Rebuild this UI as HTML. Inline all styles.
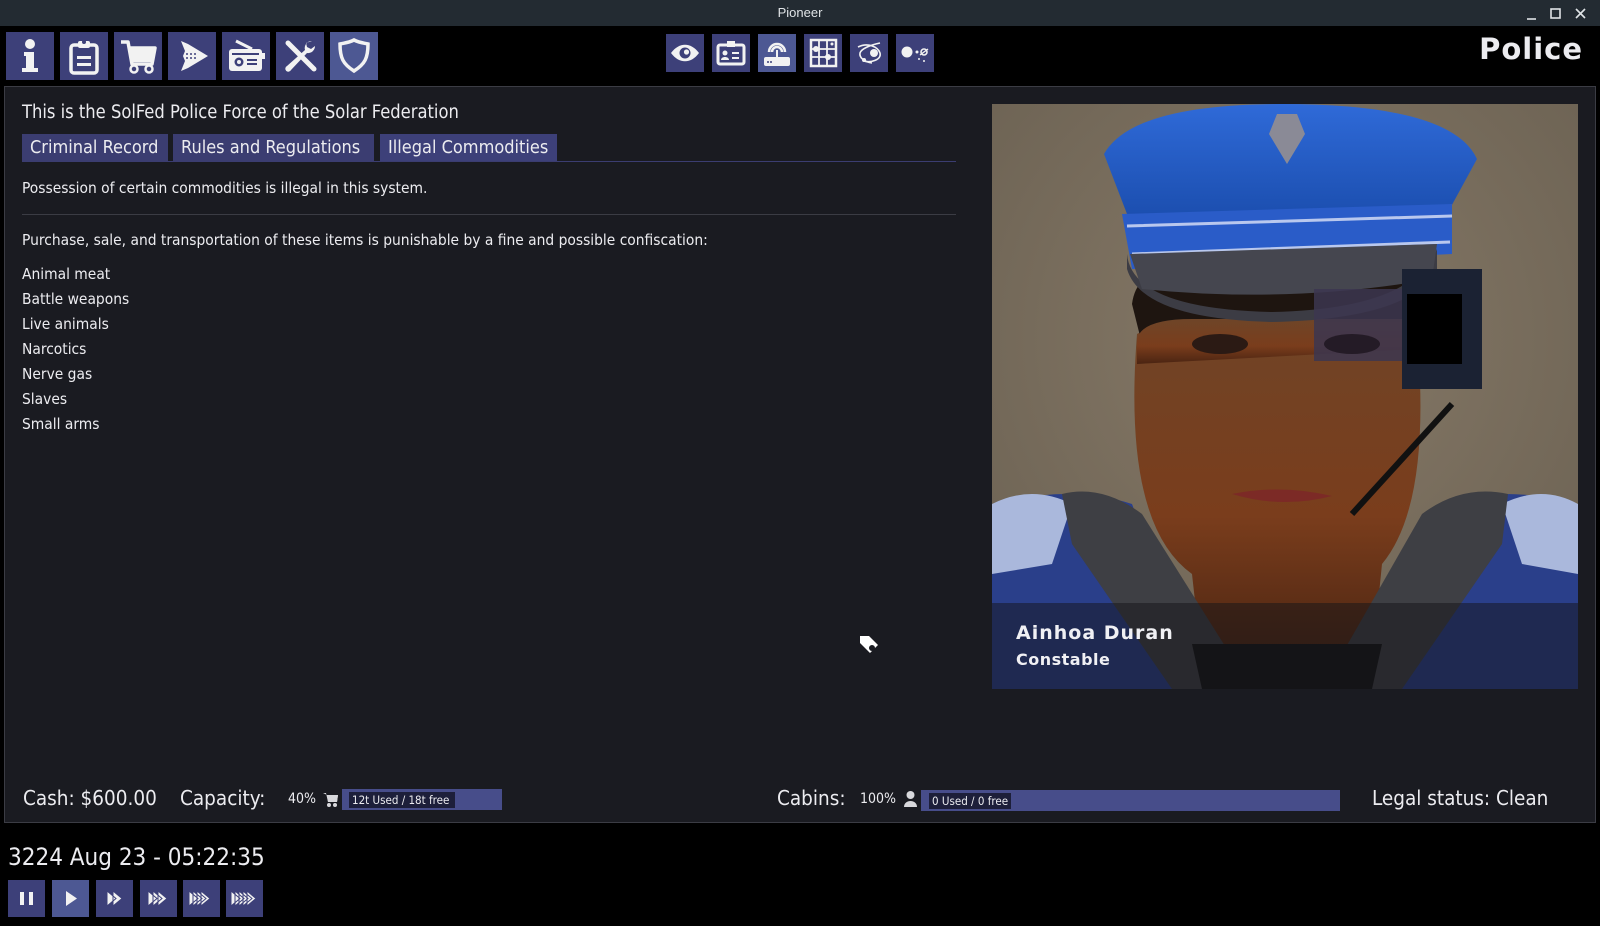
<!DOCTYPE html>
<html><head><meta charset="utf-8"><style>
*{margin:0;padding:0;box-sizing:border-box}
body{width:1600px;height:926px;background:#000;position:relative;overflow:hidden;font-family:"DejaVu Sans Condensed","Liberation Sans",sans-serif;color:#ececf0}
.abs{position:absolute}
.tb{left:0;top:0;width:1600px;height:26px;background:#232b32;color:#dfe3e6;font-size:13px;text-align:center;line-height:26px;font-family:"Liberation Sans",sans-serif}
.ib{position:absolute;top:32px;width:48px;height:48px;background:#3d4079}
.ib svg{width:48px;height:48px}
.ic{position:absolute;top:34px;width:38px;height:38px;background:#3d4079}
.ic svg{width:38px;height:38px}
.panel{left:4px;top:86px;width:1592px;height:737px;background:#1a1b21;border:1px solid #3b3c44}
.t{position:absolute;white-space:nowrap}
.tab{position:absolute;top:134px;height:27px;background:#3b3d71;font-size:18px;line-height:27px;padding-left:8px}
.li{position:absolute;left:22px;font-size:15.4px}
.btn{position:absolute;top:880px;width:37px;height:37px;background:#3d4079}
.btn svg{width:37px;height:37px}
</style></head><body>
<div class="abs tb">Pioneer</div>
<svg class="abs" style="left:1525px;top:6px" width="70" height="16" viewBox="0 0 70 16"><path d="M2 13h9" stroke="#dfe3e6" stroke-width="1.6"/><rect x="26" y="3" width="9" height="9" fill="none" stroke="#dfe3e6" stroke-width="1.6"/><path d="M51 3l9 9M60 3l-9 9" stroke="#dfe3e6" stroke-width="1.6"/></svg>

<div class="ib" style="left:6px"><svg viewBox="0 0 48 48"><circle cx="24" cy="12" r="5" fill="#f2f2f2"/><path d="M18 20h10v16h4v4H16v-4h4V24h-2z" fill="#f2f2f2"/></svg></div>
<div class="ib" style="left:60px"><svg viewBox="0 0 48 48"><rect x="11" y="13" width="26" height="28" rx="3" fill="none" stroke="#f2f2f2" stroke-width="3.5"/><rect x="18" y="9" width="12" height="7" rx="2" fill="#f2f2f2"/><circle cx="24" cy="10" r="2" fill="#3d4079"/><rect x="17" y="24" width="14" height="3" fill="#f2f2f2"/><rect x="17" y="31" width="14" height="3" fill="#f2f2f2"/></svg></div>
<div class="ib" style="left:114px"><svg viewBox="0 0 48 48"><path d="M7 10h7l4 22h20l3-16H15" fill="none" stroke="#f2f2f2" stroke-width="3.5" stroke-linejoin="round"/><path d="M16 17h25l-3 13H18z" fill="#f2f2f2"/><circle cx="20" cy="37" r="3.5" fill="none" stroke="#f2f2f2" stroke-width="2.5"/><circle cx="35" cy="37" r="3.5" fill="none" stroke="#f2f2f2" stroke-width="2.5"/></svg></div>
<div class="ib" style="left:168px"><svg viewBox="0 0 48 48"><path d="M13 9l7 3 20 12-20 12-7 3 4-10-2-5 2-5z" fill="#f2f2f2"/><path d="M18 22h10M18 26h10" stroke="#3d4079" stroke-width="1.5" stroke-dasharray="2 2"/></svg></div>
<div class="ib" style="left:222px"><svg viewBox="0 0 48 48"><path d="M14 9l16 8" stroke="#f2f2f2" stroke-width="3"/><rect x="7" y="17" width="33" height="22" rx="3" fill="#f2f2f2"/><rect x="40" y="21" width="3" height="6" fill="#f2f2f2"/><circle cx="17" cy="30" r="4.5" fill="#3d4079"/><circle cx="17" cy="30" r="2" fill="#f2f2f2"/><rect x="25" y="27" width="10" height="2" fill="#3d4079"/><rect x="25" y="31" width="10" height="2" fill="#3d4079"/><rect x="10" y="21" width="27" height="2" fill="#3d4079"/></svg></div>
<div class="ib" style="left:276px"><svg viewBox="0 0 48 48"><path d="M12 11l26 26" stroke="#f2f2f2" stroke-width="5" stroke-linecap="round"/><path d="M36 9a7 7 0 0 0-7 9L11 34a3 3 0 1 0 4 4l16-17a7 7 0 0 0 8-7l-4 3-4-2-1-4z" fill="#f2f2f2"/></svg></div>
<div class="ib" style="left:330px;background:#4d5893"><svg viewBox="0 0 48 48"><path d="M24 8c6 3 10 3 14 4 0 14-3 20-14 27C13 32 10 26 10 12c4-1 8-1 14-4z" fill="none" stroke="#f2f2f2" stroke-width="3.5"/></svg></div>

<div class="ic" style="left:666px"><svg viewBox="0 0 38 38"><path d="M5 19c8-11 20-11 28 0-8 11-20 11-28 0z" fill="#f2f2f2"/><circle cx="19" cy="19" r="5.5" fill="#3d4079"/><circle cx="20.5" cy="18" r="2.6" fill="#f2f2f2"/></svg></div>
<div class="ic" style="left:712px"><svg viewBox="0 0 38 38"><rect x="6" y="11" width="26" height="19" rx="2" fill="none" stroke="#f2f2f2" stroke-width="3"/><rect x="15" y="7" width="8" height="6" fill="#f2f2f2"/><circle cx="13" cy="19" r="2.5" fill="#f2f2f2"/><path d="M9 26c0-4 8-4 8 0z" fill="#f2f2f2"/><rect x="20" y="18" width="7" height="2" fill="#f2f2f2"/><rect x="20" y="23" width="7" height="2" fill="#f2f2f2"/></svg></div>
<div class="ic" style="left:758px;background:#4d5893"><svg viewBox="0 0 38 38"><path d="M11 18a8 8 0 0 1 16 0M14 18a5 5 0 0 1 10 0" fill="none" stroke="#f2f2f2" stroke-width="2.5"/><rect x="18" y="16" width="2" height="8" fill="#f2f2f2"/><rect x="6" y="23" width="26" height="9" rx="2" fill="#f2f2f2"/><circle cx="10" cy="28" r="1" fill="#3d4079"/><circle cx="13" cy="28" r="1" fill="#3d4079"/></svg></div>
<div class="ic" style="left:804px"><svg viewBox="0 0 38 38"><rect x="7" y="6" width="25" height="26" fill="none" stroke="#f2f2f2" stroke-width="2.5"/><path d="M15 6v26M23 6v26M7 15h25M7 23h25" stroke="#f2f2f2" stroke-width="1.8"/><circle cx="12" cy="15" r="3" fill="#f2f2f2"/><circle cx="24" cy="23" r="3" fill="#f2f2f2"/><circle cx="28" cy="10" r="1.5" fill="#f2f2f2"/></svg></div>
<div class="ic" style="left:850px"><svg viewBox="0 0 38 38"><path d="M8 13c10-5 20 0 22 6 2 7-10 10-16 8" fill="none" stroke="#f2f2f2" stroke-width="1.6"/><path d="M30 9c-10 2-19 6-20 10-1 5 5 9 12 10" fill="none" stroke="#f2f2f2" stroke-width="1.6"/><circle cx="24" cy="19" r="4" fill="#f2f2f2"/><circle cx="14" cy="26" r="2" fill="#f2f2f2"/></svg></div>
<div class="ic" style="left:896px"><svg viewBox="0 0 38 38"><circle cx="11" cy="18" r="5.5" fill="#f2f2f2"/><circle cx="21" cy="18" r="1.5" fill="#f2f2f2"/><circle cx="28" cy="18" r="3" fill="none" stroke="#f2f2f2" stroke-width="1.6"/><path d="M24 21l8-6" stroke="#f2f2f2" stroke-width="1.4"/><circle cx="23" cy="25" r="1" fill="#f2f2f2"/><circle cx="28" cy="27" r="1" fill="#f2f2f2"/></svg></div>

<div class="t" style="right:17px;top:32px;font-size:29px;font-family:'DejaVu Sans',sans-serif;font-weight:bold;letter-spacing:1px">Police</div>

<div class="abs panel"></div>
<div class="t" style="left:22px;top:102px;font-size:18.2px">This is the SolFed Police Force of the Solar Federation</div>
<div class="tab" style="left:22px;width:146px">Criminal Record</div>
<div class="tab" style="left:173px;width:201px">Rules and Regulations</div>
<div class="tab" style="left:380px;width:177px;background:#3d4079">Illegal Commodities</div>
<div class="abs" style="left:22px;top:161px;width:934px;height:1px;background:#3b3d71"></div>
<div class="t" style="left:22px;top:179px;font-size:15.4px">Possession of certain commodities is illegal in this system.</div>
<div class="abs" style="left:22px;top:214px;width:934px;height:1px;background:#3b3c44"></div>
<div class="t" style="left:22px;top:231px;font-size:15.4px">Purchase, sale, and transportation of these items is punishable by a fine and possible confiscation:</div>
<div class="li" style="top:265px">Animal meat</div>
<div class="li" style="top:290px">Battle weapons</div>
<div class="li" style="top:315px">Live animals</div>
<div class="li" style="top:340px">Narcotics</div>
<div class="li" style="top:365px">Nerve gas</div>
<div class="li" style="top:390px">Slaves</div>
<div class="li" style="top:415px">Small arms</div>

<svg class="abs" style="left:992px;top:104px" width="586" height="585" viewBox="0 0 586 585">
<defs>
<radialGradient id="bg" cx="50%" cy="40%" r="70%"><stop offset="0" stop-color="#877a68"/><stop offset="1" stop-color="#6c6253"/></radialGradient>
<linearGradient id="face" x1="0" y1="0" x2="0" y2="1"><stop offset="0" stop-color="#6e4528"/><stop offset=".6" stop-color="#7a3d1c"/><stop offset="1" stop-color="#4a2412"/></linearGradient>
<linearGradient id="hat" x1="0" y1="0" x2="0" y2="1"><stop offset="0" stop-color="#2f6ad8"/><stop offset="1" stop-color="#1c4fb0"/></linearGradient>
</defs>
<rect width="586" height="585" fill="url(#bg)"/>
<path d="M145 230 Q130 420 200 470 L210 560 L380 560 L390 460 Q440 400 425 230 Q290 150 145 230z" fill="url(#face)"/>
<path d="M140 200 Q145 160 200 165 L400 165 Q440 170 440 210 L425 240 L150 240z" fill="#1e1510"/>
<path d="M145 235 Q150 215 200 215 L410 215 L425 245 L145 260z" fill="url(#face)"/>
<path d="M112 50 Q140 0 290 0 Q460 0 485 55 L455 110 L135 110z" fill="url(#hat)"/>
<path d="M130 110 L460 100 L460 150 L140 165z" fill="#2a5cc8"/>
<path d="M135 122 L460 112 M140 150 L458 138" stroke="#b9c8ee" stroke-width="3"/>
<path d="M135 150 Q140 205 280 208 Q420 205 445 145 L445 165 Q420 215 280 218 Q150 215 135 165z" fill="#3c3c44"/>
<path d="M138 150 L445 140 L440 175 Q300 200 150 185z" fill="#45464f"/>
<path d="M285 10 l20 0 l8 20 l-18 30 l-18-30z" fill="#8a8a96"/>
<rect x="322" y="185" width="90" height="72" fill="#3c3650" opacity=".85"/>
<rect x="410" y="165" width="80" height="120" fill="#1b2233"/>
<rect x="415" y="190" width="55" height="70" fill="#000"/>
<path d="M460 300 L360 410" stroke="#111" stroke-width="6"/>
<ellipse cx="228" cy="240" rx="28" ry="10" fill="#2b1a14"/>
<ellipse cx="360" cy="240" rx="28" ry="10" fill="#241b26"/>
<path d="M240 390 Q290 380 340 392 Q290 405 240 390z" fill="#7c2a26"/>
<path d="M0 400 Q80 380 140 400 L210 585 L0 585z" fill="#2a3f8a"/>
<path d="M586 400 Q510 380 450 400 L380 585 L586 585z" fill="#2a3f8a"/>
<path d="M0 400 Q40 380 80 400 L60 460 L0 470z" fill="#aab8dc"/>
<path d="M586 400 Q550 380 510 400 L530 460 L586 470z" fill="#aab8dc"/>
<path d="M70 390 Q110 380 150 410 L260 585 L180 585 L80 440z" fill="#3e3f44"/>
<path d="M516 390 Q470 380 430 410 L330 585 L410 585 L510 440z" fill="#3e3f44"/>
<path d="M200 540 L390 540 L380 585 L210 585z" fill="#141416"/>
<rect x="0" y="499" width="586" height="86" fill="rgba(20,20,24,0.5)"/>
<text x="24" y="535" font-family="DejaVu Sans, sans-serif" font-size="19" font-weight="bold" fill="#f0f0f4" letter-spacing="1">Ainhoa Duran</text>
<text x="24" y="561" font-family="DejaVu Sans, sans-serif" font-size="16" font-weight="bold" fill="#f0f0f4" letter-spacing=".5">Constable</text>
</svg>

<svg class="abs" style="left:858px;top:634px" width="22" height="22" viewBox="0 0 22 22"><path d="M2 2h9l9 9-8 8-10-10z" fill="#fff"/><circle cx="14" cy="14" r="3" fill="#1a1b21"/></svg>

<div class="t" style="left:23px;top:786px;font-size:20.5px">Cash: $600.00</div>
<div class="t" style="left:180px;top:786px;font-size:20.5px">Capacity:</div>
<div class="t" style="left:288px;top:791px;font-size:14px">40%</div>
<svg class="abs" style="left:322px;top:791px" width="17" height="17" viewBox="0 0 17 17"><path d="M1 2h3l2 9h9l1-7H5" fill="#d8d8dc"/><path d="M5 4h11l-1 7H6z" fill="#d8d8dc"/><circle cx="7" cy="14" r="2" fill="#d8d8dc"/><circle cx="13" cy="14" r="2" fill="#d8d8dc"/></svg>
<div class="abs" style="left:342px;top:789px;width:160px;height:21px;background:#474d8a"></div>
<div class="t" style="left:349px;top:792px;height:16px;width:106px;background:#1d1f3a;font-size:11.5px;line-height:16px;padding-left:3px">12t Used / 18t free</div>
<div class="t" style="left:777px;top:786px;font-size:20.5px">Cabins:</div>
<div class="t" style="left:860px;top:791px;font-size:14px">100%</div>
<svg class="abs" style="left:903px;top:790px" width="15" height="18" viewBox="0 0 15 18"><circle cx="7.5" cy="5" r="4" fill="#d8d8dc"/><path d="M1 17c0-8 13-8 13 0z" fill="#d8d8dc"/></svg>
<div class="abs" style="left:921px;top:790px;width:419px;height:21px;background:#474d8a"></div>
<div class="t" style="left:929px;top:793px;height:16px;width:82px;background:#1d1f3a;font-size:11.5px;line-height:16px;padding-left:3px">0 Used / 0 free</div>
<div class="t" style="left:1372px;top:786px;font-size:20.5px">Legal status: Clean</div>

<div class="t" style="left:8px;top:843px;font-size:24px">3224 Aug 23 - 05:22:35</div>
<div class="btn" style="left:8px"><svg viewBox="0 0 37 37"><rect x="12" y="12" width="4" height="13" fill="#f2f2f2"/><rect x="21" y="12" width="4" height="13" fill="#f2f2f2"/></svg></div>
<div class="btn" style="left:52px;background:#4d5893"><svg viewBox="0 0 37 37"><path d="M14 11l11 7.5-11 7.5z" fill="#f2f2f2"/></svg></div>
<div class="btn" style="left:96px"><svg viewBox="0 0 37 37"><path d="M11 11l9 7.5-9 7.5z M17 11l9 7.5-9 7.5z" fill="#f2f2f2" stroke="#3d4079" stroke-width="1"/></svg></div>
<div class="btn" style="left:140px"><svg viewBox="0 0 37 37"><path d="M8 11l9 7.5-9 7.5z M13 11l9 7.5-9 7.5z M18 11l9 7.5-9 7.5z" fill="#f2f2f2" stroke="#3d4079" stroke-width="1"/></svg></div>
<div class="btn" style="left:183px"><svg viewBox="0 0 37 37"><path d="M6 11l9 7.5-9 7.5z M10 11l9 7.5-9 7.5z M14 11l9 7.5-9 7.5z M18 11l9 7.5-9 7.5z" fill="#f2f2f2" stroke="#3d4079" stroke-width="1"/></svg></div>
<div class="btn" style="left:226px"><svg viewBox="0 0 37 37"><path d="M5 11l9 7.5-9 7.5z M9 11l9 7.5-9 7.5z M13 11l9 7.5-9 7.5z M17 11l9 7.5-9 7.5z M21 11l9 7.5-9 7.5z" fill="#f2f2f2" stroke="#3d4079" stroke-width="1"/></svg></div>
</body></html>
